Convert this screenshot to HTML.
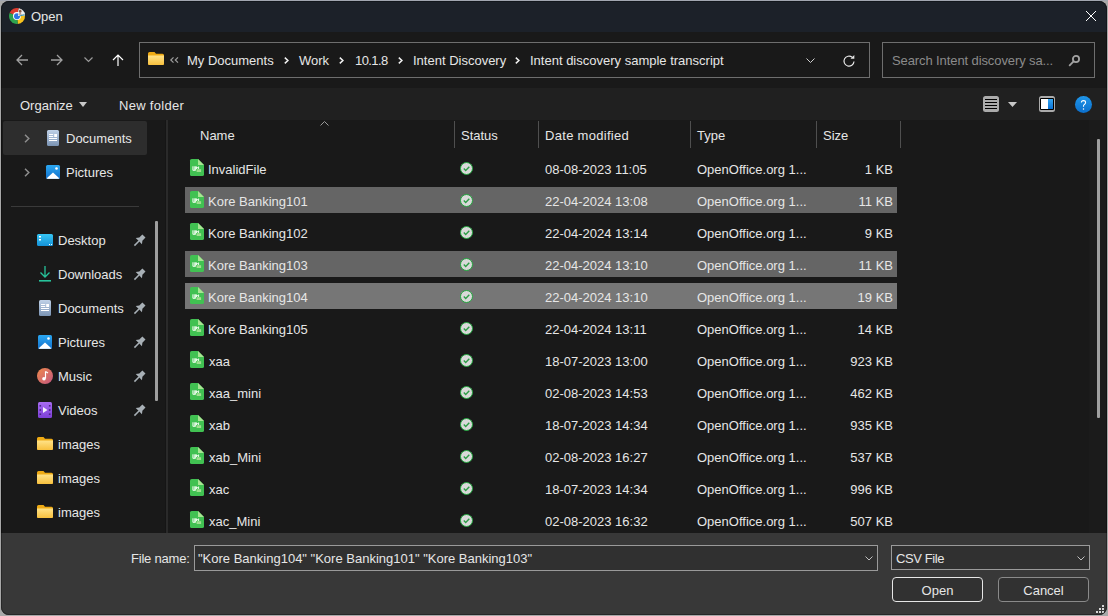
<!DOCTYPE html>
<html><head><meta charset="utf-8">
<style>
*{box-sizing:border-box;margin:0;padding:0}
html,body{width:1108px;height:616px;overflow:hidden;background:#a8a8a8}
body{font-family:"Liberation Sans",sans-serif;font-size:13px;color:#e6e6e6;position:relative}
#win{position:absolute;left:0;top:0;width:1108px;height:616px;clip-path:inset(1px 1px 1px 1px round 8px);background:#191919}
.a{position:absolute}
.t{position:absolute;white-space:nowrap;line-height:16px;height:16px}
.btnbg{background:#313131}
#title{left:0;top:0;width:1108px;height:32px;background:#1c2129}
#nav{left:0;top:32px;width:1108px;height:56px;background:#191919}
#cmd{left:0;top:88px;width:1108px;height:32px;background:#202020}
#content{left:0;top:120px;width:1108px;height:413px;background:#191919}
#bottom{left:0;top:533px;width:1108px;height:83px;background:#383838}
.box{position:absolute;border:1px solid #6e6e6e}
.sel{position:absolute;background:#676767}
.hsep{position:absolute;width:1px;background:#4f4f4f;top:121px;height:27px}
.gray{color:#8b8b8b}
svg{position:absolute;overflow:visible}
</style></head><body>
<div class="a" style="left:0;top:0;width:1108px;height:1px;background:#a2a6b0"></div>
<div id="win">
  <div class="a" id="title"></div>
  <div class="a" id="nav"></div>
  <div class="a" id="cmd"></div>
  <div class="a" id="content"></div>
  <div class="a" id="bottom"></div>

  <!-- TITLE -->
  <svg style="left:9px;top:8px" width="16" height="16" viewBox="0 0 16 16"><path d="M8 8 L0.58 5.00 A8 8 0 0 1 9.94 0.24 Z" fill="#dd3b2e"/><path d="M8 8 L9.94 0.24 A8 8 0 0 1 15.98 7.44 Z" fill="#f2f2f2"/><path d="M8 8 L15.98 7.44 A8 8 0 0 1 8.70 15.97 Z" fill="#f8c31d"/><path d="M8 8 L8.70 15.97 A8 8 0 0 1 0.58 5.00 Z" fill="#2ea44f"/><circle cx="8" cy="8" r="4" fill="#fff"/><circle cx="8" cy="8.2" r="3" fill="#2f76e4"/><path d="M9 8 L10 1 L15.5 4.5 L15.8 7.6 Z" fill="#f2f2f2"/><ellipse cx="11.2" cy="3.2" rx="1.3" ry="1.6" fill="#8a5a48"/><path d="M9.6 6.5 Q11.2 4.2 12.8 6.5 Z" fill="#9c6d58"/><path d="M10.2 7.8 Q12.5 6.2 15.6 6.2 L15.7 7.2 Q12.8 7.6 10.5 8.5 Z" fill="#2a8fb8"/></svg>
  <div class="t" style="left:31px;top:9px;font-size:13px">Open</div>
  <svg style="left:1086px;top:11px" width="10" height="10" viewBox="0 0 10 10">
    <path d="M0 0 L10 10 M10 0 L0 10" stroke="#fff" stroke-width="1"/>
  </svg>

  <!-- NAV -->
  <svg style="left:16px;top:54px" width="12" height="12" viewBox="0 0 12 12">
    <path d="M6 1 L1 6 L6 11 M1 6 H12" stroke="#a0a0a0" stroke-width="1.3" fill="none"/>
  </svg>
  <svg style="left:51px;top:54px" width="12" height="12" viewBox="0 0 12 12">
    <path d="M6 1 L11 6 L6 11 M11 6 H0" stroke="#a0a0a0" stroke-width="1.3" fill="none"/>
  </svg>
  <svg style="left:84px;top:57px" width="9" height="6" viewBox="0 0 9 6">
    <path d="M0.5 0.5 L4.5 4.5 L8.5 0.5" stroke="#9a9a9a" stroke-width="1.2" fill="none"/>
  </svg>
  <svg style="left:112px;top:54px" width="12" height="12" viewBox="0 0 12 12">
    <path d="M1 6 L6 1 L11 6 M6 1 V12" stroke="#fff" stroke-width="1.2" fill="none"/>
  </svg>

  <div class="box" style="left:139px;top:42px;width:731px;height:36px"></div>
  <svg style="left:148px;top:52px" width="16" height="13" viewBox="0 0 16 13">
    <defs><linearGradient id="fa" x1="0" y1="0" x2="0" y2="1"><stop offset="0" stop-color="#ffe287"/><stop offset="1" stop-color="#f7c03e"/></linearGradient></defs>
    <path d="M0 1.5 Q0 0 1.5 0 H6.5 L8 1.8 H14.5 Q16 1.8 16 3.3 V11.5 Q16 13 14.5 13 H1.5 Q0 13 0 11.5 Z" fill="#eeaa14"/>
    <path d="M0 3.6 H16 V11.5 Q16 13 14.5 13 H1.5 Q0 13 0 11.5 Z" fill="url(#fa)"/>
  </svg>
  <svg style="left:170px;top:57px" width="9" height="6" viewBox="0 0 9 6"><path d="M3.5 0.3 L0.8 3 L3.5 5.7 M8 0.3 L5.3 3 L8 5.7" stroke="#9c9c9c" stroke-width="1.2" fill="none"/></svg>
  <div class="t" style="left:187px;top:53px">My Documents</div>
  <svg style="left:284px;top:57px" width="5" height="7" viewBox="0 0 5 7"><path d="M0.8 0.6 L3.9 3.5 L0.8 6.4" stroke="#f0f0f0" stroke-width="1.5" fill="none"/></svg>
  <div class="t" style="left:299px;top:53px">Work</div>
  <svg style="left:339px;top:57px" width="5" height="7" viewBox="0 0 5 7"><path d="M0.8 0.6 L3.9 3.5 L0.8 6.4" stroke="#f0f0f0" stroke-width="1.5" fill="none"/></svg>
  <div class="t" style="left:355px;top:53px;letter-spacing:-0.6px">10.1.8</div>
  <svg style="left:398px;top:57px" width="5" height="7" viewBox="0 0 5 7"><path d="M0.8 0.6 L3.9 3.5 L0.8 6.4" stroke="#f0f0f0" stroke-width="1.5" fill="none"/></svg>
  <div class="t" style="left:413px;top:53px">Intent Discovery</div>
  <svg style="left:515px;top:57px" width="5" height="7" viewBox="0 0 5 7"><path d="M0.8 0.6 L3.9 3.5 L0.8 6.4" stroke="#f0f0f0" stroke-width="1.5" fill="none"/></svg>
  <div class="t" style="left:530px;top:53px">Intent discovery sample transcript</div>
  <svg style="left:806px;top:58px" width="9" height="5" viewBox="0 0 9 5">
    <path d="M0.5 0.5 L4.5 4.5 L8.5 0.5" stroke="#d0d0d0" stroke-width="1" fill="none"/>
  </svg>
  <svg style="left:843px;top:55px" width="12" height="12" viewBox="0 0 12 12">
    <path d="M11 6.5 A5 5 0 1 1 9.2 2.3" stroke="#e6e6e6" stroke-width="1.2" fill="none"/>
    <path d="M11.3 0 V3.7 H7.5 Z" fill="#e6e6e6"/>
  </svg>

  <div class="box" style="left:882px;top:42px;width:213px;height:36px"></div>
  <div class="t gray" style="left:892px;top:53px;letter-spacing:-0.1px">Search Intent discovery sa...</div>
  <svg style="left:1068px;top:54px" width="13" height="13" viewBox="0 0 13 13">
    <circle cx="8" cy="5" r="3.1" stroke="#a3a3a3" stroke-width="1.8" fill="none"/>
    <path d="M5.8 7.2 L1.2 11.8" stroke="#a3a3a3" stroke-width="1.8"/>
  </svg>

  <!-- CMD -->
  <div class="t" style="left:20px;top:98px">Organize</div>
  <svg style="left:79px;top:102px" width="8" height="5" viewBox="0 0 8 5"><path d="M0 0 H8 L4 5 Z" fill="#c8c8c8"/></svg>
  <div class="t" style="left:119px;top:98px;letter-spacing:0.3px">New folder</div>
  <svg style="left:983px;top:96px" width="16" height="16" viewBox="0 0 16 16">
    <rect x="0" y="0" width="16" height="16" rx="2.5" fill="#ababab"/>
    <path d="M2 3.5 H14 M2 6.5 H14 M2 9.5 H14 M2 12.5 H14" stroke="#000" stroke-width="1"/>
  </svg>
  <svg style="left:1008px;top:102px" width="9" height="5" viewBox="0 0 9 5"><path d="M0 0 H9 L4.5 5 Z" fill="#c8c8c8"/></svg>
  <svg style="left:1039px;top:96px" width="16" height="16" viewBox="0 0 16 16">
    <defs><linearGradient id="pv" x1="0" y1="0" x2="0" y2="1"><stop offset="0" stop-color="#33a6f2"/><stop offset="1" stop-color="#0b72d6"/></linearGradient></defs>
    <rect x="0" y="0" width="16" height="16" rx="2.5" fill="#ababab"/>
    <rect x="1" y="2" width="14" height="12" rx="1" fill="#000"/>
    <rect x="2" y="3" width="7" height="10" fill="#fff"/>
    <rect x="9" y="3" width="5" height="10" fill="url(#pv)"/>
  </svg>
  <svg style="left:1075px;top:96px" width="17" height="17" viewBox="0 0 17 17">
    <defs><linearGradient id="hp" x1="0" y1="0" x2="0" y2="1"><stop offset="0" stop-color="#1f96ea"/><stop offset="1" stop-color="#0b6fcc"/></linearGradient></defs>
    <circle cx="8.5" cy="8.5" r="8.5" fill="url(#hp)"/>
    <path d="M6.4 6.6 Q6.4 4.6 8.5 4.6 Q10.6 4.6 10.6 6.5 Q10.6 7.7 9.4 8.4 Q8.5 9 8.5 10 V10.8" stroke="#fff" stroke-width="1.1" fill="none"/>
    <circle cx="8.5" cy="12.9" r="0.75" fill="#fff"/>
  </svg>

  <!-- SIDEBAR -->
  <div class="a" style="left:3px;top:121px;width:144px;height:34px;background:#2d2d2d;border-radius:2px"></div>
  <div class="a" style="left:165px;top:120px;width:1px;height:413px;background:#151515"></div>
  <div class="a" style="left:166px;top:120px;width:2px;height:413px;background:#2a2a2a"></div>
  <div class="a" style="left:155px;top:221px;width:3px;height:180px;background:#9f9f9f;border-radius:1px"></div>

  <svg style="left:24px;top:134px" width="6" height="9" viewBox="0 0 6 9"><path d="M1 0.8 L4.8 4.5 L1 8.2" stroke="#8c8c8c" stroke-width="1.5" fill="none"/></svg>
<svg style="left:47px;top:130px" width="12" height="16" viewBox="0 0 12 16">
<defs><linearGradient id="dg1" x1="0" y1="0" x2="0" y2="1"><stop offset="0" stop-color="#c0d2e8"/><stop offset="1" stop-color="#7a93b3"/></linearGradient></defs>
<rect x="0" y="0" width="12" height="16" rx="1.5" fill="url(#dg1)"/>
<path d="M2 4.5 H6.2 M2 6.5 H6.2 M2 8.5 H10 M2 10.5 H10" stroke="#fff" stroke-width="1"/>
<rect x="7.2" y="4" width="2.8" height="3" fill="#fff"/>
</svg>
<div class="t" style="left:66px;top:131px">Documents</div>
<svg style="left:24px;top:168px" width="6" height="9" viewBox="0 0 6 9"><path d="M1 0.8 L4.8 4.5 L1 8.2" stroke="#8c8c8c" stroke-width="1.5" fill="none"/></svg>
<svg style="left:46px;top:165px" width="14" height="14" viewBox="0 0 14 14">
<defs><linearGradient id="pg1" x1="0" y1="0" x2="0" y2="1"><stop offset="0" stop-color="#2ba8f2"/><stop offset="1" stop-color="#1270cc"/></linearGradient></defs>
<rect x="0" y="0" width="14" height="14" rx="1.5" fill="url(#pg1)"/>
<path d="M1 13 L7 7.5 L13 13 Z" fill="#fff"/>
<path d="M0.5 13 H13.5 V12.5 Q13.5 14 12 14 H2 Q0.5 14 0.5 12.5 Z" fill="#d8ecfb"/>
<circle cx="10.5" cy="3.5" r="1.3" fill="#fff"/>
</svg>
<div class="t" style="left:66px;top:165px">Pictures</div>
<div class="a" style="left:11px;top:206px;width:128px;height:1px;background:#3a3a3a"></div>
<svg style="left:37px;top:234px" width="16" height="12" viewBox="0 0 16 12">
<defs><linearGradient id="dk" x1="0" y1="0" x2="0" y2="1"><stop offset="0" stop-color="#36c6f4"/><stop offset="1" stop-color="#1592d8"/></linearGradient></defs>
<rect x="0" y="0" width="16" height="12" rx="1.5" fill="url(#dk)"/>
<rect x="2" y="2" width="2" height="1.5" fill="#fff"/><rect x="2" y="5" width="2" height="1.5" fill="#fff"/>
<rect x="12" y="10" width="1" height="1" fill="#fff"/><rect x="14" y="10" width="1" height="1" fill="#fff"/>
</svg>
<div class="t" style="left:58px;top:233px">Desktop</div>
<svg style="left:133px;top:235px" width="12" height="12" viewBox="-6 -6 12 12"><g transform="rotate(45)"><path d="M-2.2 -7 H2.2 V-2.6 L4.4 0.2 H-4.4 L-2.2 -2.6 Z" fill="#a8b0b6"/><rect x="-0.75" y="0" width="1.5" height="6.5" fill="#a8b0b6"/></g></svg>
<svg style="left:39px;top:266px" width="12" height="16" viewBox="0 0 12 16">
<path d="M6 0 V11 M1.5 6.5 L6 11 L10.5 6.5" stroke="#27c29a" stroke-width="1.3" fill="none"/>
<rect x="0" y="14" width="12" height="1.6" fill="#27c29a"/>
</svg>
<div class="t" style="left:58px;top:267px">Downloads</div>
<svg style="left:133px;top:269px" width="12" height="12" viewBox="-6 -6 12 12"><g transform="rotate(45)"><path d="M-2.2 -7 H2.2 V-2.6 L4.4 0.2 H-4.4 L-2.2 -2.6 Z" fill="#a8b0b6"/><rect x="-0.75" y="0" width="1.5" height="6.5" fill="#a8b0b6"/></g></svg>
<svg style="left:39px;top:300px" width="12" height="16" viewBox="0 0 12 16">
<defs><linearGradient id="dg2" x1="0" y1="0" x2="0" y2="1"><stop offset="0" stop-color="#c0d2e8"/><stop offset="1" stop-color="#7a93b3"/></linearGradient></defs>
<rect x="0" y="0" width="12" height="16" rx="1.5" fill="url(#dg2)"/>
<path d="M2 4.5 H6.2 M2 6.5 H6.2 M2 8.5 H10 M2 10.5 H10" stroke="#fff" stroke-width="1"/>
<rect x="7.2" y="4" width="2.8" height="3" fill="#fff"/>
</svg>
<div class="t" style="left:58px;top:301px">Documents</div>
<svg style="left:133px;top:303px" width="12" height="12" viewBox="-6 -6 12 12"><g transform="rotate(45)"><path d="M-2.2 -7 H2.2 V-2.6 L4.4 0.2 H-4.4 L-2.2 -2.6 Z" fill="#a8b0b6"/><rect x="-0.75" y="0" width="1.5" height="6.5" fill="#a8b0b6"/></g></svg>
<svg style="left:38px;top:335px" width="14" height="14" viewBox="0 0 14 14">
<defs><linearGradient id="pg2" x1="0" y1="0" x2="0" y2="1"><stop offset="0" stop-color="#2ba8f2"/><stop offset="1" stop-color="#1270cc"/></linearGradient></defs>
<rect x="0" y="0" width="14" height="14" rx="1.5" fill="url(#pg2)"/>
<path d="M1 13 L7 7.5 L13 13 Z" fill="#fff"/>
<path d="M0.5 13 H13.5 V12.5 Q13.5 14 12 14 H2 Q0.5 14 0.5 12.5 Z" fill="#d8ecfb"/>
<circle cx="10.5" cy="3.5" r="1.3" fill="#fff"/>
</svg>
<div class="t" style="left:58px;top:335px">Pictures</div>
<svg style="left:133px;top:337px" width="12" height="12" viewBox="-6 -6 12 12"><g transform="rotate(45)"><path d="M-2.2 -7 H2.2 V-2.6 L4.4 0.2 H-4.4 L-2.2 -2.6 Z" fill="#a8b0b6"/><rect x="-0.75" y="0" width="1.5" height="6.5" fill="#a8b0b6"/></g></svg>
<svg style="left:37px;top:368px" width="16" height="16" viewBox="0 0 16 16">
<defs><linearGradient id="mu" x1="0" y1="0" x2="1" y2="1"><stop offset="0" stop-color="#f08a4b"/><stop offset="1" stop-color="#c2557f"/></linearGradient></defs>
<circle cx="8" cy="8" r="8" fill="url(#mu)"/>
<path d="M8.5 3.5 V10.5" stroke="#fff" stroke-width="1.2"/><path d="M8.5 3.5 L11 5" stroke="#fff" stroke-width="1.2"/>
<circle cx="7" cy="10.8" r="1.8" fill="#fff"/>
</svg>
<div class="t" style="left:58px;top:369px">Music</div>
<svg style="left:133px;top:371px" width="12" height="12" viewBox="-6 -6 12 12"><g transform="rotate(45)"><path d="M-2.2 -7 H2.2 V-2.6 L4.4 0.2 H-4.4 L-2.2 -2.6 Z" fill="#a8b0b6"/><rect x="-0.75" y="0" width="1.5" height="6.5" fill="#a8b0b6"/></g></svg>
<svg style="left:38px;top:402px" width="14" height="16" viewBox="0 0 14 16">
<defs><linearGradient id="vd" x1="0" y1="0" x2="0" y2="1"><stop offset="0" stop-color="#a86cf2"/><stop offset="1" stop-color="#7d3fd6"/></linearGradient></defs>
<rect x="0" y="0" width="14" height="16" rx="1.5" fill="url(#vd)"/>
<rect x="1.5" y="3" width="1.6" height="1.6" fill="#4a2480"/><rect x="1.5" y="7.2" width="1.6" height="1.6" fill="#4a2480"/><rect x="1.5" y="11.4" width="1.6" height="1.6" fill="#4a2480"/>
<rect x="10.9" y="3" width="1.6" height="1.6" fill="#4a2480"/><rect x="10.9" y="7.2" width="1.6" height="1.6" fill="#4a2480"/><rect x="10.9" y="11.4" width="1.6" height="1.6" fill="#4a2480"/>
<path d="M5 5 L9.5 8 L5 11 Z" fill="#f4f0fa"/>
</svg>
<div class="t" style="left:58px;top:403px">Videos</div>
<svg style="left:133px;top:405px" width="12" height="12" viewBox="-6 -6 12 12"><g transform="rotate(45)"><path d="M-2.2 -7 H2.2 V-2.6 L4.4 0.2 H-4.4 L-2.2 -2.6 Z" fill="#a8b0b6"/><rect x="-0.75" y="0" width="1.5" height="6.5" fill="#a8b0b6"/></g></svg>
<svg style="left:37px;top:437px" width="16" height="13" viewBox="0 0 16 13">
<defs><linearGradient id="fd" x1="0" y1="0" x2="0" y2="1"><stop offset="0" stop-color="#ffe287"/><stop offset="1" stop-color="#f7c03e"/></linearGradient></defs>
<path d="M0 1.5 Q0 0 1.5 0 H6.5 L8 1.8 H14.5 Q16 1.8 16 3.3 V11.5 Q16 13 14.5 13 H1.5 Q0 13 0 11.5 Z" fill="#eeaa14"/>
<path d="M0 3.6 H16 V11.5 Q16 13 14.5 13 H1.5 Q0 13 0 11.5 Z" fill="url(#fd)"/>
</svg>
<div class="t" style="left:58px;top:437px">images</div>
<svg style="left:37px;top:471px" width="16" height="13" viewBox="0 0 16 13">
<defs><linearGradient id="fd" x1="0" y1="0" x2="0" y2="1"><stop offset="0" stop-color="#ffe287"/><stop offset="1" stop-color="#f7c03e"/></linearGradient></defs>
<path d="M0 1.5 Q0 0 1.5 0 H6.5 L8 1.8 H14.5 Q16 1.8 16 3.3 V11.5 Q16 13 14.5 13 H1.5 Q0 13 0 11.5 Z" fill="#eeaa14"/>
<path d="M0 3.6 H16 V11.5 Q16 13 14.5 13 H1.5 Q0 13 0 11.5 Z" fill="url(#fd)"/>
</svg>
<div class="t" style="left:58px;top:471px">images</div>
<svg style="left:37px;top:505px" width="16" height="13" viewBox="0 0 16 13">
<defs><linearGradient id="fd" x1="0" y1="0" x2="0" y2="1"><stop offset="0" stop-color="#ffe287"/><stop offset="1" stop-color="#f7c03e"/></linearGradient></defs>
<path d="M0 1.5 Q0 0 1.5 0 H6.5 L8 1.8 H14.5 Q16 1.8 16 3.3 V11.5 Q16 13 14.5 13 H1.5 Q0 13 0 11.5 Z" fill="#eeaa14"/>
<path d="M0 3.6 H16 V11.5 Q16 13 14.5 13 H1.5 Q0 13 0 11.5 Z" fill="url(#fd)"/>
</svg>
<div class="t" style="left:58px;top:505px">images</div>

  <!-- LIST HEADER -->
  <div class="t" style="left:200px;top:128px">Name</div>
  <svg style="left:320px;top:121px" width="9" height="5" viewBox="0 0 9 5"><path d="M0.5 4.5 L4.5 0.5 L8.5 4.5" stroke="#9a9a9a" stroke-width="1" fill="none"/></svg>
  <div class="hsep" style="left:454px"></div>
  <div class="t" style="left:461px;top:128px">Status</div>
  <div class="hsep" style="left:538px"></div>
  <div class="t" style="left:545px;top:128px;letter-spacing:0.3px">Date modified</div>
  <div class="hsep" style="left:690px"></div>
  <div class="t" style="left:697px;top:128px">Type</div>
  <div class="hsep" style="left:816px"></div>
  <div class="t" style="left:823px;top:128px">Size</div>
  <div class="hsep" style="left:900px"></div>

  <svg style="left:190px;top:159px" width="14" height="17" viewBox="0 0 14 17">
<path d="M1.6 0 H8 L14 6 V15.4 Q14 17 12.4 17 H1.6 Q0 17 0 15.4 V1.6 Q0 0 1.6 0 Z" fill="#41c152"/>
<path d="M8 0 L14 6 H8 Z" fill="#a8e592"/>
<path d="M2.9 7.3 V11.3 H5.6 M4.25 7.3 V11.3 M5.6 7.3 V11.3 M6.5 7.5 V10 M8.6 7.5 V10 M6.5 8.7 H8.6" stroke="#eafbea" stroke-width="1" fill="none"/>
<rect x="6.6" y="10.2" width="4.5" height="2.8" fill="#9fdf90"/>
</svg>
<svg style="left:460px;top:162px" width="13" height="13" viewBox="0 0 13 13">
<circle cx="6.5" cy="6.5" r="6" fill="#d9d9d9" stroke="#22a83e" stroke-width="1"/>
<path d="M3.8 6.6 L5.7 8.4 L9.3 4.8" stroke="#2c9e46" stroke-width="1.4" fill="none"/>
</svg>
<div class="t" style="left:208px;top:162px">InvalidFile</div>
<div class="t" style="left:545px;top:162px">08-08-2023 11:05</div>
<div class="t" style="left:697px;top:162px">OpenOffice.org 1...</div>
<div class="t" style="left:793px;top:162px;width:100px;text-align:right">1 KB</div>
<div class="sel" style="left:185px;top:187px;width:712px;height:26px;background:#656565"></div>
<svg style="left:190px;top:191px" width="14" height="17" viewBox="0 0 14 17">
<path d="M1.6 0 H8 L14 6 V15.4 Q14 17 12.4 17 H1.6 Q0 17 0 15.4 V1.6 Q0 0 1.6 0 Z" fill="#41c152"/>
<path d="M8 0 L14 6 H8 Z" fill="#a8e592"/>
<path d="M2.9 7.3 V11.3 H5.6 M4.25 7.3 V11.3 M5.6 7.3 V11.3 M6.5 7.5 V10 M8.6 7.5 V10 M6.5 8.7 H8.6" stroke="#eafbea" stroke-width="1" fill="none"/>
<rect x="6.6" y="10.2" width="4.5" height="2.8" fill="#9fdf90"/>
</svg>
<svg style="left:460px;top:194px" width="13" height="13" viewBox="0 0 13 13">
<circle cx="6.5" cy="6.5" r="6" fill="#d9d9d9" stroke="#22a83e" stroke-width="1"/>
<path d="M3.8 6.6 L5.7 8.4 L9.3 4.8" stroke="#2c9e46" stroke-width="1.4" fill="none"/>
</svg>
<div class="t" style="left:208px;top:194px">Kore Banking101</div>
<div class="t" style="left:545px;top:194px">22-04-2024 13:08</div>
<div class="t" style="left:697px;top:194px">OpenOffice.org 1...</div>
<div class="t" style="left:793px;top:194px;width:100px;text-align:right">11 KB</div>
<svg style="left:190px;top:223px" width="14" height="17" viewBox="0 0 14 17">
<path d="M1.6 0 H8 L14 6 V15.4 Q14 17 12.4 17 H1.6 Q0 17 0 15.4 V1.6 Q0 0 1.6 0 Z" fill="#41c152"/>
<path d="M8 0 L14 6 H8 Z" fill="#a8e592"/>
<path d="M2.9 7.3 V11.3 H5.6 M4.25 7.3 V11.3 M5.6 7.3 V11.3 M6.5 7.5 V10 M8.6 7.5 V10 M6.5 8.7 H8.6" stroke="#eafbea" stroke-width="1" fill="none"/>
<rect x="6.6" y="10.2" width="4.5" height="2.8" fill="#9fdf90"/>
</svg>
<svg style="left:460px;top:226px" width="13" height="13" viewBox="0 0 13 13">
<circle cx="6.5" cy="6.5" r="6" fill="#d9d9d9" stroke="#22a83e" stroke-width="1"/>
<path d="M3.8 6.6 L5.7 8.4 L9.3 4.8" stroke="#2c9e46" stroke-width="1.4" fill="none"/>
</svg>
<div class="t" style="left:208px;top:226px">Kore Banking102</div>
<div class="t" style="left:545px;top:226px">22-04-2024 13:14</div>
<div class="t" style="left:697px;top:226px">OpenOffice.org 1...</div>
<div class="t" style="left:793px;top:226px;width:100px;text-align:right">9 KB</div>
<div class="sel" style="left:185px;top:251px;width:712px;height:26px;background:#656565"></div>
<svg style="left:190px;top:255px" width="14" height="17" viewBox="0 0 14 17">
<path d="M1.6 0 H8 L14 6 V15.4 Q14 17 12.4 17 H1.6 Q0 17 0 15.4 V1.6 Q0 0 1.6 0 Z" fill="#41c152"/>
<path d="M8 0 L14 6 H8 Z" fill="#a8e592"/>
<path d="M2.9 7.3 V11.3 H5.6 M4.25 7.3 V11.3 M5.6 7.3 V11.3 M6.5 7.5 V10 M8.6 7.5 V10 M6.5 8.7 H8.6" stroke="#eafbea" stroke-width="1" fill="none"/>
<rect x="6.6" y="10.2" width="4.5" height="2.8" fill="#9fdf90"/>
</svg>
<svg style="left:460px;top:258px" width="13" height="13" viewBox="0 0 13 13">
<circle cx="6.5" cy="6.5" r="6" fill="#d9d9d9" stroke="#22a83e" stroke-width="1"/>
<path d="M3.8 6.6 L5.7 8.4 L9.3 4.8" stroke="#2c9e46" stroke-width="1.4" fill="none"/>
</svg>
<div class="t" style="left:208px;top:258px">Kore Banking103</div>
<div class="t" style="left:545px;top:258px">22-04-2024 13:10</div>
<div class="t" style="left:697px;top:258px">OpenOffice.org 1...</div>
<div class="t" style="left:793px;top:258px;width:100px;text-align:right">11 KB</div>
<div class="sel" style="left:185px;top:283px;width:712px;height:26px;background:#767676"></div>
<svg style="left:190px;top:287px" width="14" height="17" viewBox="0 0 14 17">
<path d="M1.6 0 H8 L14 6 V15.4 Q14 17 12.4 17 H1.6 Q0 17 0 15.4 V1.6 Q0 0 1.6 0 Z" fill="#41c152"/>
<path d="M8 0 L14 6 H8 Z" fill="#a8e592"/>
<path d="M2.9 7.3 V11.3 H5.6 M4.25 7.3 V11.3 M5.6 7.3 V11.3 M6.5 7.5 V10 M8.6 7.5 V10 M6.5 8.7 H8.6" stroke="#eafbea" stroke-width="1" fill="none"/>
<rect x="6.6" y="10.2" width="4.5" height="2.8" fill="#9fdf90"/>
</svg>
<svg style="left:460px;top:290px" width="13" height="13" viewBox="0 0 13 13">
<circle cx="6.5" cy="6.5" r="6" fill="#d9d9d9" stroke="#22a83e" stroke-width="1"/>
<path d="M3.8 6.6 L5.7 8.4 L9.3 4.8" stroke="#2c9e46" stroke-width="1.4" fill="none"/>
</svg>
<div class="t" style="left:208px;top:290px">Kore Banking104</div>
<div class="t" style="left:545px;top:290px">22-04-2024 13:10</div>
<div class="t" style="left:697px;top:290px">OpenOffice.org 1...</div>
<div class="t" style="left:793px;top:290px;width:100px;text-align:right">19 KB</div>
<svg style="left:190px;top:319px" width="14" height="17" viewBox="0 0 14 17">
<path d="M1.6 0 H8 L14 6 V15.4 Q14 17 12.4 17 H1.6 Q0 17 0 15.4 V1.6 Q0 0 1.6 0 Z" fill="#41c152"/>
<path d="M8 0 L14 6 H8 Z" fill="#a8e592"/>
<path d="M2.9 7.3 V11.3 H5.6 M4.25 7.3 V11.3 M5.6 7.3 V11.3 M6.5 7.5 V10 M8.6 7.5 V10 M6.5 8.7 H8.6" stroke="#eafbea" stroke-width="1" fill="none"/>
<rect x="6.6" y="10.2" width="4.5" height="2.8" fill="#9fdf90"/>
</svg>
<svg style="left:460px;top:322px" width="13" height="13" viewBox="0 0 13 13">
<circle cx="6.5" cy="6.5" r="6" fill="#d9d9d9" stroke="#22a83e" stroke-width="1"/>
<path d="M3.8 6.6 L5.7 8.4 L9.3 4.8" stroke="#2c9e46" stroke-width="1.4" fill="none"/>
</svg>
<div class="t" style="left:208px;top:322px">Kore Banking105</div>
<div class="t" style="left:545px;top:322px">22-04-2024 13:11</div>
<div class="t" style="left:697px;top:322px">OpenOffice.org 1...</div>
<div class="t" style="left:793px;top:322px;width:100px;text-align:right">14 KB</div>
<svg style="left:190px;top:351px" width="14" height="17" viewBox="0 0 14 17">
<path d="M1.6 0 H8 L14 6 V15.4 Q14 17 12.4 17 H1.6 Q0 17 0 15.4 V1.6 Q0 0 1.6 0 Z" fill="#41c152"/>
<path d="M8 0 L14 6 H8 Z" fill="#a8e592"/>
<path d="M2.9 7.3 V11.3 H5.6 M4.25 7.3 V11.3 M5.6 7.3 V11.3 M6.5 7.5 V10 M8.6 7.5 V10 M6.5 8.7 H8.6" stroke="#eafbea" stroke-width="1" fill="none"/>
<rect x="6.6" y="10.2" width="4.5" height="2.8" fill="#9fdf90"/>
</svg>
<svg style="left:460px;top:354px" width="13" height="13" viewBox="0 0 13 13">
<circle cx="6.5" cy="6.5" r="6" fill="#d9d9d9" stroke="#22a83e" stroke-width="1"/>
<path d="M3.8 6.6 L5.7 8.4 L9.3 4.8" stroke="#2c9e46" stroke-width="1.4" fill="none"/>
</svg>
<div class="t" style="left:209px;top:354px">xaa</div>
<div class="t" style="left:545px;top:354px">18-07-2023 13:00</div>
<div class="t" style="left:697px;top:354px">OpenOffice.org 1...</div>
<div class="t" style="left:793px;top:354px;width:100px;text-align:right">923 KB</div>
<svg style="left:190px;top:383px" width="14" height="17" viewBox="0 0 14 17">
<path d="M1.6 0 H8 L14 6 V15.4 Q14 17 12.4 17 H1.6 Q0 17 0 15.4 V1.6 Q0 0 1.6 0 Z" fill="#41c152"/>
<path d="M8 0 L14 6 H8 Z" fill="#a8e592"/>
<path d="M2.9 7.3 V11.3 H5.6 M4.25 7.3 V11.3 M5.6 7.3 V11.3 M6.5 7.5 V10 M8.6 7.5 V10 M6.5 8.7 H8.6" stroke="#eafbea" stroke-width="1" fill="none"/>
<rect x="6.6" y="10.2" width="4.5" height="2.8" fill="#9fdf90"/>
</svg>
<svg style="left:460px;top:386px" width="13" height="13" viewBox="0 0 13 13">
<circle cx="6.5" cy="6.5" r="6" fill="#d9d9d9" stroke="#22a83e" stroke-width="1"/>
<path d="M3.8 6.6 L5.7 8.4 L9.3 4.8" stroke="#2c9e46" stroke-width="1.4" fill="none"/>
</svg>
<div class="t" style="left:209px;top:386px">xaa_mini</div>
<div class="t" style="left:545px;top:386px">02-08-2023 14:53</div>
<div class="t" style="left:697px;top:386px">OpenOffice.org 1...</div>
<div class="t" style="left:793px;top:386px;width:100px;text-align:right">462 KB</div>
<svg style="left:190px;top:415px" width="14" height="17" viewBox="0 0 14 17">
<path d="M1.6 0 H8 L14 6 V15.4 Q14 17 12.4 17 H1.6 Q0 17 0 15.4 V1.6 Q0 0 1.6 0 Z" fill="#41c152"/>
<path d="M8 0 L14 6 H8 Z" fill="#a8e592"/>
<path d="M2.9 7.3 V11.3 H5.6 M4.25 7.3 V11.3 M5.6 7.3 V11.3 M6.5 7.5 V10 M8.6 7.5 V10 M6.5 8.7 H8.6" stroke="#eafbea" stroke-width="1" fill="none"/>
<rect x="6.6" y="10.2" width="4.5" height="2.8" fill="#9fdf90"/>
</svg>
<svg style="left:460px;top:418px" width="13" height="13" viewBox="0 0 13 13">
<circle cx="6.5" cy="6.5" r="6" fill="#d9d9d9" stroke="#22a83e" stroke-width="1"/>
<path d="M3.8 6.6 L5.7 8.4 L9.3 4.8" stroke="#2c9e46" stroke-width="1.4" fill="none"/>
</svg>
<div class="t" style="left:209px;top:418px">xab</div>
<div class="t" style="left:545px;top:418px">18-07-2023 14:34</div>
<div class="t" style="left:697px;top:418px">OpenOffice.org 1...</div>
<div class="t" style="left:793px;top:418px;width:100px;text-align:right">935 KB</div>
<svg style="left:190px;top:447px" width="14" height="17" viewBox="0 0 14 17">
<path d="M1.6 0 H8 L14 6 V15.4 Q14 17 12.4 17 H1.6 Q0 17 0 15.4 V1.6 Q0 0 1.6 0 Z" fill="#41c152"/>
<path d="M8 0 L14 6 H8 Z" fill="#a8e592"/>
<path d="M2.9 7.3 V11.3 H5.6 M4.25 7.3 V11.3 M5.6 7.3 V11.3 M6.5 7.5 V10 M8.6 7.5 V10 M6.5 8.7 H8.6" stroke="#eafbea" stroke-width="1" fill="none"/>
<rect x="6.6" y="10.2" width="4.5" height="2.8" fill="#9fdf90"/>
</svg>
<svg style="left:460px;top:450px" width="13" height="13" viewBox="0 0 13 13">
<circle cx="6.5" cy="6.5" r="6" fill="#d9d9d9" stroke="#22a83e" stroke-width="1"/>
<path d="M3.8 6.6 L5.7 8.4 L9.3 4.8" stroke="#2c9e46" stroke-width="1.4" fill="none"/>
</svg>
<div class="t" style="left:209px;top:450px">xab_Mini</div>
<div class="t" style="left:545px;top:450px">02-08-2023 16:27</div>
<div class="t" style="left:697px;top:450px">OpenOffice.org 1...</div>
<div class="t" style="left:793px;top:450px;width:100px;text-align:right">537 KB</div>
<svg style="left:190px;top:479px" width="14" height="17" viewBox="0 0 14 17">
<path d="M1.6 0 H8 L14 6 V15.4 Q14 17 12.4 17 H1.6 Q0 17 0 15.4 V1.6 Q0 0 1.6 0 Z" fill="#41c152"/>
<path d="M8 0 L14 6 H8 Z" fill="#a8e592"/>
<path d="M2.9 7.3 V11.3 H5.6 M4.25 7.3 V11.3 M5.6 7.3 V11.3 M6.5 7.5 V10 M8.6 7.5 V10 M6.5 8.7 H8.6" stroke="#eafbea" stroke-width="1" fill="none"/>
<rect x="6.6" y="10.2" width="4.5" height="2.8" fill="#9fdf90"/>
</svg>
<svg style="left:460px;top:482px" width="13" height="13" viewBox="0 0 13 13">
<circle cx="6.5" cy="6.5" r="6" fill="#d9d9d9" stroke="#22a83e" stroke-width="1"/>
<path d="M3.8 6.6 L5.7 8.4 L9.3 4.8" stroke="#2c9e46" stroke-width="1.4" fill="none"/>
</svg>
<div class="t" style="left:209px;top:482px">xac</div>
<div class="t" style="left:545px;top:482px">18-07-2023 14:34</div>
<div class="t" style="left:697px;top:482px">OpenOffice.org 1...</div>
<div class="t" style="left:793px;top:482px;width:100px;text-align:right">996 KB</div>
<svg style="left:190px;top:511px" width="14" height="17" viewBox="0 0 14 17">
<path d="M1.6 0 H8 L14 6 V15.4 Q14 17 12.4 17 H1.6 Q0 17 0 15.4 V1.6 Q0 0 1.6 0 Z" fill="#41c152"/>
<path d="M8 0 L14 6 H8 Z" fill="#a8e592"/>
<path d="M2.9 7.3 V11.3 H5.6 M4.25 7.3 V11.3 M5.6 7.3 V11.3 M6.5 7.5 V10 M8.6 7.5 V10 M6.5 8.7 H8.6" stroke="#eafbea" stroke-width="1" fill="none"/>
<rect x="6.6" y="10.2" width="4.5" height="2.8" fill="#9fdf90"/>
</svg>
<svg style="left:460px;top:514px" width="13" height="13" viewBox="0 0 13 13">
<circle cx="6.5" cy="6.5" r="6" fill="#d9d9d9" stroke="#22a83e" stroke-width="1"/>
<path d="M3.8 6.6 L5.7 8.4 L9.3 4.8" stroke="#2c9e46" stroke-width="1.4" fill="none"/>
</svg>
<div class="t" style="left:209px;top:514px">xac_Mini</div>
<div class="t" style="left:545px;top:514px">02-08-2023 16:32</div>
<div class="t" style="left:697px;top:514px">OpenOffice.org 1...</div>
<div class="t" style="left:793px;top:514px;width:100px;text-align:right">507 KB</div>

  <div class="a" style="left:1089px;top:120px;width:18px;height:413px;background:#1b1b1b"></div>
  <div class="a" style="left:1097px;top:139px;width:3px;height:279px;background:#9f9f9f;border-radius:1px"></div>

  <!-- BOTTOM -->
  <div class="t" style="left:131px;top:551px;letter-spacing:-0.2px">File name:</div>
  <div class="box" style="left:194px;top:545px;width:684px;height:26px;border-color:#9a9a9a;background:#303030"></div>
  <div class="t" style="left:198px;top:551px">"Kore Banking104" "Kore Banking101" "Kore Banking103"</div>
  <svg style="left:865px;top:556px" width="8" height="5" viewBox="0 0 8 5"><path d="M0.5 0.5 L4 4 L7.5 0.5" stroke="#c0c0c0" stroke-width="1" fill="none"/></svg>
  <div class="box" style="left:891px;top:545px;width:199px;height:25px;border-color:#9a9a9a;background:#303030"></div>
  <div class="t" style="left:896px;top:551px;letter-spacing:-0.4px">CSV File</div>
  <svg style="left:1077px;top:556px" width="8" height="5" viewBox="0 0 8 5"><path d="M0.5 0.5 L4 4 L7.5 0.5" stroke="#c0c0c0" stroke-width="1" fill="none"/></svg>
  <div class="a" style="left:892px;top:577px;width:91px;height:25px;border:1px solid #e6e6e6;border-radius:4px;background:#313131"></div>
  <div class="t" style="left:892px;top:583px;width:91px;text-align:center">Open</div>
  <div class="a" style="left:998px;top:577px;width:91px;height:25px;border:1px solid #8a8a8a;border-radius:4px;background:#313131"></div>
  <div class="t" style="left:998px;top:583px;width:91px;text-align:center">Cancel</div>
<div class="a" style="left:1102px;top:605px;width:2px;height:2px;background:#d6d6d6"></div><div class="a" style="left:1099px;top:608px;width:2px;height:2px;background:#d6d6d6"></div><div class="a" style="left:1102px;top:608px;width:2px;height:2px;background:#d6d6d6"></div><div class="a" style="left:1096px;top:611px;width:2px;height:2px;background:#d6d6d6"></div><div class="a" style="left:1099px;top:611px;width:2px;height:2px;background:#d6d6d6"></div><div class="a" style="left:1102px;top:611px;width:2px;height:2px;background:#d6d6d6"></div>
<div class="a" style="left:1px;top:1px;width:1106px;height:614px;border-radius:8px;box-shadow:inset 0 0 0 1px rgba(0,0,0,0.3)"></div>
</div>
</body></html>
